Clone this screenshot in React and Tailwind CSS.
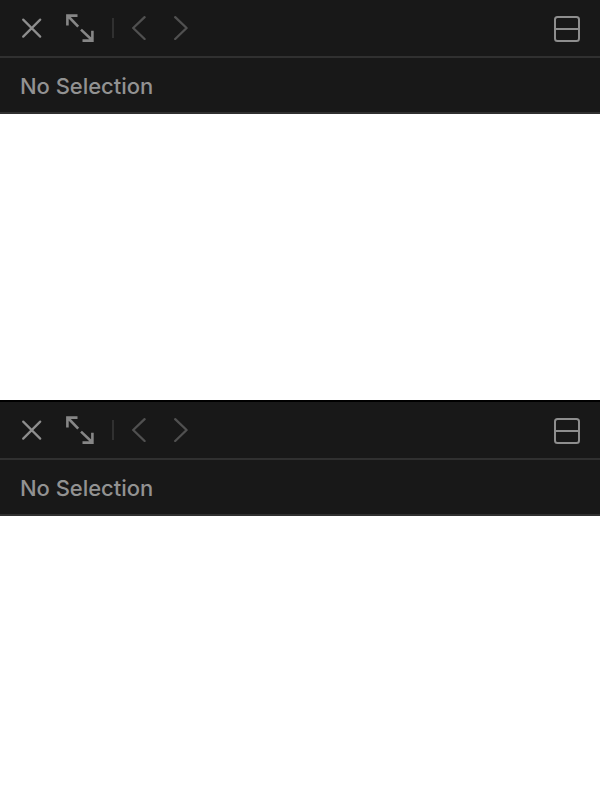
function CloseIcon() {
  return (
    <svg className="h-5 w-5" viewBox="0 0 20 20" fill="none" stroke="#8e8e8e" strokeWidth="2.2" strokeLinecap="round">
      <path d="M1.2 1.6 18.2 18.6M18.2 1.6 1.2 18.6" />
    </svg>
  );
}

function ExpandIcon() {
  return (
    <svg className="ml-6 h-7 w-7" viewBox="0 0 28 28" fill="none" stroke="#868686" strokeWidth="2.6" strokeLinecap="butt" strokeLinejoin="miter">
      <path d="M1.4 11.5V1.6H11.5M2 2 12.2 12.6" />
      <path d="M26.4 16.8V26.6H16.5M26 26 15 15.6" />
    </svg>
  );
}

function Chevron({ points, className }) {
  return (
    <svg className={className} viewBox="0 0 14 24" fill="none" stroke="#505050" strokeWidth="2.3" strokeLinecap="round" strokeLinejoin="round">
      <polyline points={points} />
    </svg>
  );
}

function SplitIcon() {
  return (
    <svg className="mt-0.5 ml-auto h-[26px] w-[26px]" viewBox="0 0 26 26" fill="none" stroke="#8e8e8e" strokeWidth="2">
      <rect x="1" y="1" width="24" height="24" rx="2.5" />
      <path d="M1 13H25" />
    </svg>
  );
}

function Inspector({ className }) {
  return (
    <section className={className}>
      <header className="flex h-[58px] items-center border-b-2 border-[#303030] bg-[#181818] pr-5 pl-[22px]">
        <CloseIcon />
        <ExpandIcon />
        <div className="ml-[18px] h-5 w-0.5 bg-[#303030]" />
        <Chevron className="ml-[18px] h-6 w-3.5" points="12.6,1.2 1.2,12 12.6,23" />
        <Chevron className="ml-7 h-6 w-3.5" points="1.2,1.2 12.6,12 1.2,23" />
        <SplitIcon />
      </header>
      <div className="flex h-14 items-center border-b-2 border-[#303030] bg-[#181818] pt-0.5 pl-5">
        <span className="font-['Inter',sans-serif] text-[22px] leading-7 font-medium tracking-[-0.04px] whitespace-nowrap text-[#929292]">No Selection</span>
      </div>
    </section>
  );
}

export default function App() {
  return (
    <main className="flex h-[800px] w-[600px] flex-col overflow-hidden bg-white">
      <Inspector className="h-[400px]" />
      <Inspector className="h-[400px] border-t-2 border-black" />
    </main>
  );
}
